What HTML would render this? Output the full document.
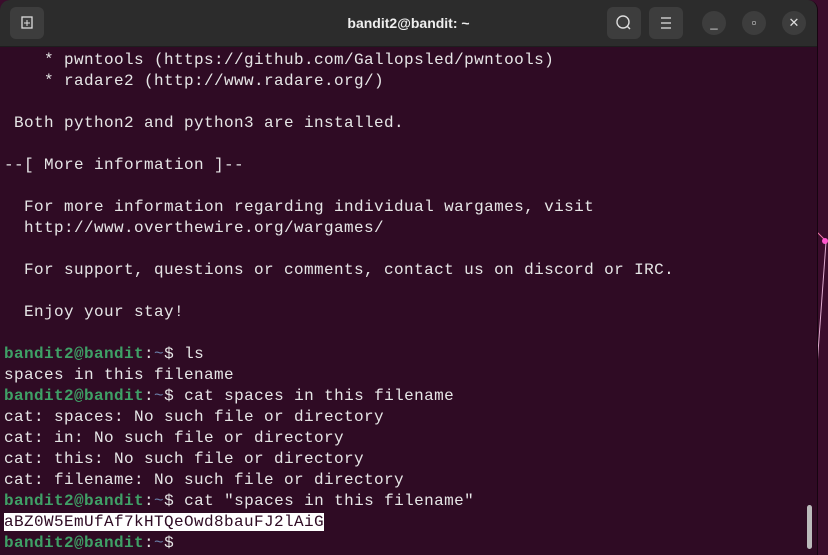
<!DOCTYPE html>
<html><head><style>
body{margin:0;width:828px;height:555px;overflow:hidden;background:#3b0d2c;position:relative;font-family:"Liberation Sans",sans-serif}
.win{position:absolute;left:0;top:0;width:817px;height:555px;background:#2f0b24;border-right:1px solid #160510;border-radius:10px 10px 0 0;overflow:hidden}
.tb{height:46px;background:#2c2c2c;position:relative;border-bottom:1px solid #1e1e1e}
.btn{position:absolute;top:7px;width:34px;height:32px;background:#3d3d3d;border-radius:6px}
.circ{position:absolute;top:11px;width:24px;height:24px;border-radius:50%;background:#3d3d3d;color:#ddd;font-size:13px;text-align:center;line-height:24px}
.title{position:absolute;top:0;left:0;right:0;text-align:center;line-height:46px;color:#eee;font-weight:bold;font-size:14px}
pre{margin:0;position:absolute;left:4px;top:50px;font-family:"Liberation Mono",monospace;font-size:16px;letter-spacing:0.4px;line-height:21px;color:#e6e6e6}
.g{color:#3fa066;font-weight:bold}.b{color:#6a7fa8}
.hl{background:#fff;color:#2f0b24}
.sb{position:absolute;left:807px;top:505px;width:5px;height:44px;background:#bbb;border-radius:3px}
</style></head><body>
<svg style="position:absolute;left:815px;top:230px" width="13" height="160"><line x1="0" y1="0" x2="10" y2="10" stroke="#e7a" stroke-width="1"/><line x1="11" y1="12" x2="1" y2="150" stroke="#dac" stroke-width="1"/><circle cx="10" cy="11" r="3" fill="#f5c"/></svg>
<div class="win">
<div class="tb">
<div class="btn" style="left:10px"><svg width="34" height="32"><rect x="12" y="10" width="10" height="11" fill="none" stroke="#ddd" stroke-width="1.3"/><line x1="17" y1="13" x2="17" y2="19" stroke="#ddd"/><line x1="14" y1="16" x2="20" y2="16" stroke="#ddd"/></svg></div>
<div class="title">bandit2@bandit: ~</div>
<div class="btn" style="left:607px"><svg width="34" height="32"><circle cx="16" cy="15" r="6" fill="none" stroke="#ddd" stroke-width="1.4"/><line x1="20" y1="19" x2="23" y2="22" stroke="#ddd" stroke-width="1.4"/></svg></div>
<div class="btn" style="left:649px"><svg width="34" height="32"><line x1="12" y1="11" x2="22" y2="11" stroke="#ddd" stroke-width="1.3"/><line x1="12" y1="16" x2="22" y2="16" stroke="#ddd" stroke-width="1.3"/><line x1="12" y1="21" x2="22" y2="21" stroke="#ddd" stroke-width="1.3"/></svg></div>
<div class="circ" style="left:702px">_</div>
<div class="circ" style="left:742px">▫</div>
<div class="circ" style="left:782px">✕</div>
</div>
<pre>    * pwntools (https://github.com/Gallopsled/pwntools)
    * radare2 (http://www.radare.org/)

 Both python2 and python3 are installed.

--[ More information ]--

  For more information regarding individual wargames, visit
  http://www.overthewire.org/wargames/

  For support, questions or comments, contact us on discord or IRC.

  Enjoy your stay!

<span class="g">bandit2@bandit</span>:<span class="b">~</span>$ ls
spaces in this filename
<span class="g">bandit2@bandit</span>:<span class="b">~</span>$ cat spaces in this filename
cat: spaces: No such file or directory
cat: in: No such file or directory
cat: this: No such file or directory
cat: filename: No such file or directory
<span class="g">bandit2@bandit</span>:<span class="b">~</span>$ cat "spaces in this filename"
<span class="hl">aBZ0W5EmUfAf7kHTQeOwd8bauFJ2lAiG</span>
<span class="g">bandit2@bandit</span>:<span class="b">~</span>$</pre>
<div class="sb"></div>
</div>
</body></html>
